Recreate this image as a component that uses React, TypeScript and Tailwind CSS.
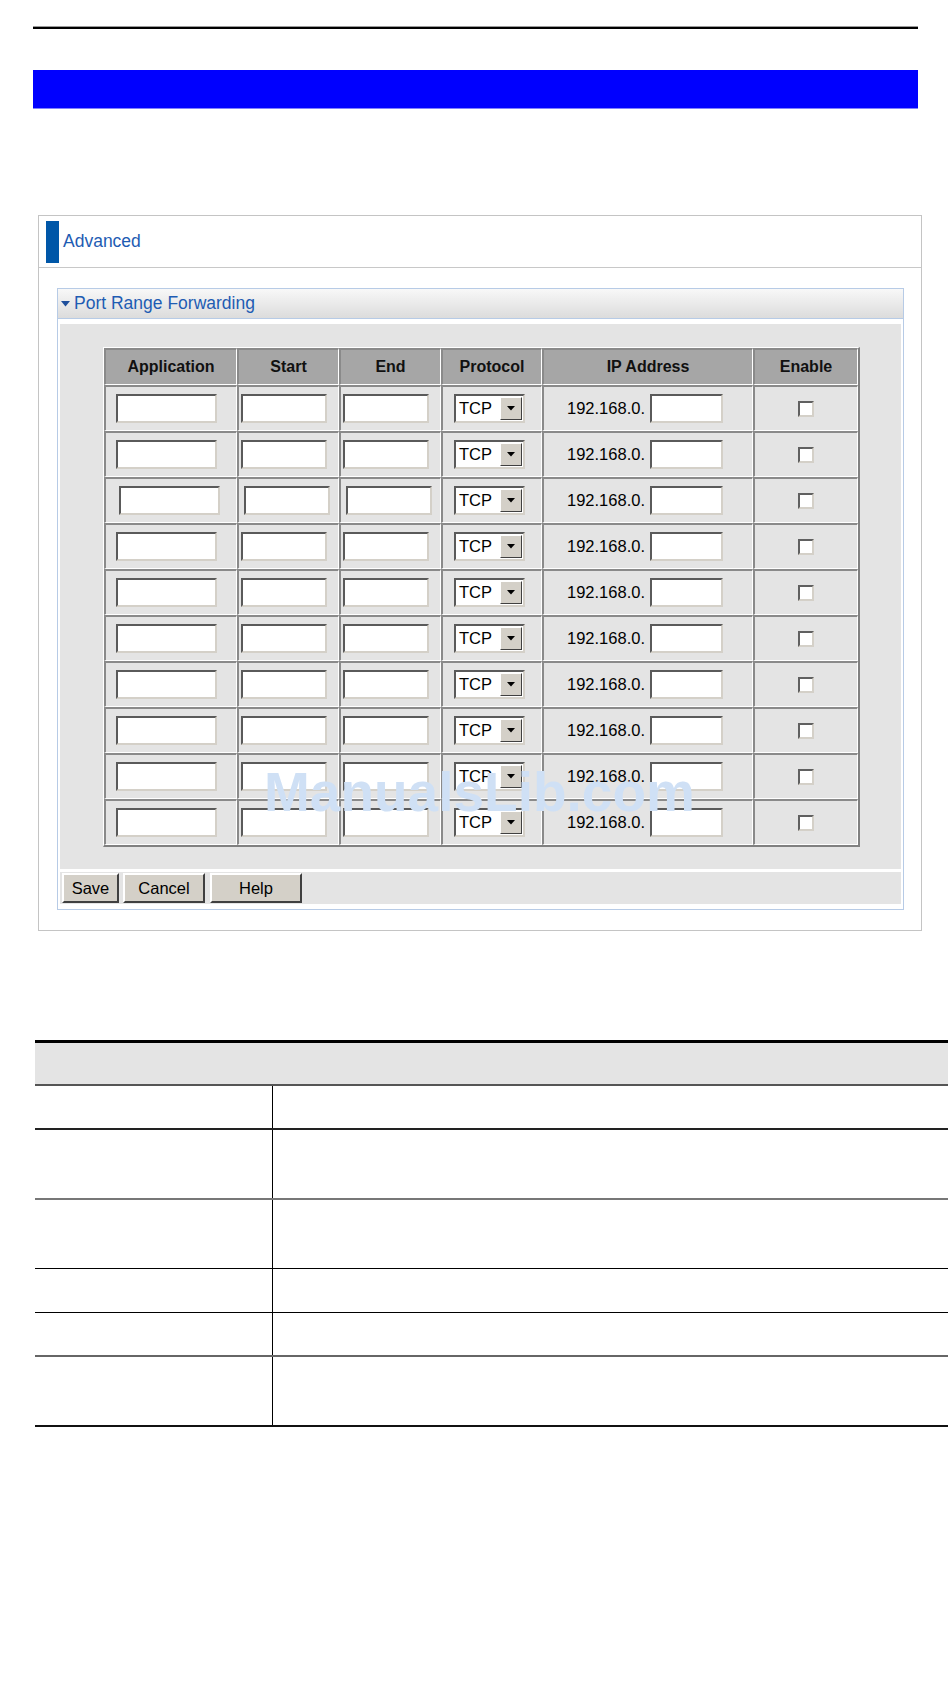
import React from "react";

const cols = "grid grid-cols-[133px_102px_102px_101px_211px_105px]";
const cell =
  "border-t-2 border-l-2 border-r border-b border-t-[#8a8a8a] border-l-[#8a8a8a] border-r-white border-b-white";
const inset =
  "border-2 border-t-[#5a5a5a] border-l-[#5a5a5a] border-b-[#d4d0c8] border-r-[#d4d0c8] bg-white";

function TextBox({ w }: { w: string }) {
  return <div className={`${inset} ${w} h-[29px]`} />;
}

function Select() {
  return (
    <div className={`${inset} w-[71px] h-[29px] flex items-stretch`}>
      <div className="flex-1 flex items-center pl-[3px] text-[16.5px] leading-none text-black">TCP</div>
      <div className="w-[22px] m-[1px] bg-[#d4d0c8] border border-t-white border-l-white border-b-[#404040] border-r-[#404040] flex items-center justify-center">
        <svg width="8" height="5" viewBox="0 0 8 5">
          <path d="M0 0 H8 L4 4.5 Z" fill="#000" />
        </svg>
      </div>
    </div>
  );
}

function Row({ shift }: { shift?: boolean }) {
  return (
    <div className={cols}>
      <div className={`${cell} h-[46px] flex items-center ${shift ? "pl-[13px]" : "pl-[10px]"}`}>
        <TextBox w="w-[101px]" />
      </div>
      <div className={`${cell} h-[46px] flex items-center ${shift ? "pl-[5px]" : "pl-[2px]"}`}>
        <TextBox w="w-[86px]" />
      </div>
      <div className={`${cell} h-[46px] flex items-center ${shift ? "pl-[5px]" : "pl-[2px]"}`}>
        <TextBox w="w-[86px]" />
      </div>
      <div className={`${cell} h-[46px] flex items-center pl-[11px]`}>
        <Select />
      </div>
      <div className={`${cell} h-[46px] flex items-center pl-[23px]`}>
        <span className="text-[16.5px] leading-none text-black">192.168.0.</span>
        <div className="ml-[5px]">
          <TextBox w="w-[73px]" />
        </div>
      </div>
      <div className={`${cell} h-[46px] flex items-center justify-center`}>
        <div className="w-[16px] h-[16px] bg-white border-2 border-t-[#606060] border-l-[#606060] border-b-[#d4d0c8] border-r-[#d4d0c8]" />
      </div>
    </div>
  );
}

function Btn({ label, w }: { label: string; w: string }) {
  return (
    <div
      className={`${w} h-[30px] bg-[#d4d0c8] border-2 border-t-white border-l-white border-b-[#404040] border-r-[#404040] flex items-center justify-center text-[16.5px] leading-none text-black`}
    >
      {label}
    </div>
  );
}

export default function App() {
  const headers = ["Application", "Start", "End", "Protocol", "IP Address", "Enable"];
  return (
    <div className="relative w-[950px] min-h-[1692px] bg-white font-['Liberation_Sans',Arial,sans-serif] pt-[26px]">
      <div className="ml-[33px] w-[885px] h-[1px] bg-[#9a9a9a]" />
      <div className="ml-[33px] w-[885px] h-[2px] bg-black" />
      <div className="mt-[41px] ml-[33px] w-[885px] h-[38px] bg-[#0000ff]" />
      <div className="ml-[33px] w-[885px] h-[1px] bg-[#8080ff]" />

      {/* Panel */}
      <div className="mt-[106px] ml-[38px] w-[884px] h-[716px] border border-[#c4c4c4]">
        <div className="h-[52px] border-b border-[#c8c8c8] flex items-center">
          <div className="ml-[7px] w-[13px] h-[42px] bg-[#0057a8]" />
          <span className="ml-[4px] text-[17.5px] leading-none text-[#1e5cb3]">Advanced</span>
        </div>

        <div className="mt-[20px] ml-[18px] w-[847px] border border-[#b7cbe6]">
          <div className="h-[30px] border-b border-[#b7cbe6] bg-gradient-to-b from-[#f8f8f8] to-[#dcdcdc] flex items-center">
            <svg className="ml-[3px]" width="9" height="6" viewBox="0 0 9 6">
              <path d="M0 0 H9 L4.5 5.5 Z" fill="#1e4f9c" />
            </svg>
            <span className="ml-[4px] text-[17.5px] leading-none text-[#1e5cb3]">Port Range Forwarding</span>
          </div>
          <div className="px-[2px] pt-[5px] pb-[5px]">
            <div className="h-[545px] bg-[#e4e4e4] pt-[23px] pl-[43px]">
              <div className="w-[757px] border-t border-l border-t-white border-l-white border-b-2 border-r-2 border-b-[#808080] border-r-[#808080]">
                <div className={cols}>
                  {headers.map((h) => (
                    <div
                      key={h}
                      className={`${cell} h-[37px] bg-[#a6a6a6] flex items-center justify-center text-[16px] font-bold text-[#111] leading-none`}
                    >
                      {h}
                    </div>
                  ))}
                </div>
                {Array.from({ length: 10 }).map((_, i) => (
                  <Row key={i} shift={i === 2} />
                ))}
              </div>
            </div>
            <div className="mt-[3px] h-[32px] bg-[#e4e4e4] pt-[1px] pl-[2px] flex gap-[4px]">
              <Btn label="Save" w="w-[57px]" />
              <Btn label="Cancel" w="w-[82px]" />
              <div className="ml-[1px]">
                <Btn label="Help" w="w-[92px]" />
              </div>
            </div>
          </div>
        </div>
      </div>

      {/* Bottom table */}
      <div className="mt-[109px] ml-[35px] w-[913px]">
        <div className="h-[3px] bg-black" />
        <div className="h-[41px] bg-[#e4e4e4]" />
        <div className="h-[2px] bg-[#555]" />
        {[
          { h: "h-[42px]", line: "h-[2px] bg-[#222]" },
          { h: "h-[68px]", line: "h-[2px] bg-[#777]" },
          { h: "h-[68px]", line: "h-[1px] bg-black" },
          { h: "h-[43px]", line: "h-[1px] bg-black" },
          { h: "h-[42px]", line: "h-[2px] bg-[#666]" },
          { h: "h-[68px]", line: "h-[2px] bg-[#111]" },
        ].map((r, i) => (
          <div key={i}>
            <div className={`${r.h} flex`}>
              <div className="w-[237px]" />
              <div className="flex-1 border-l border-black" />
            </div>
            <div className={r.line} />
          </div>
        ))}
      </div>

      {/* Watermark */}
      <div className="pointer-events-none absolute left-[264px] top-[765px] text-[55px] leading-[55px] font-bold text-[#cfe0f5] whitespace-nowrap">
        ManualsLib.com
      </div>
    </div>
  );
}
